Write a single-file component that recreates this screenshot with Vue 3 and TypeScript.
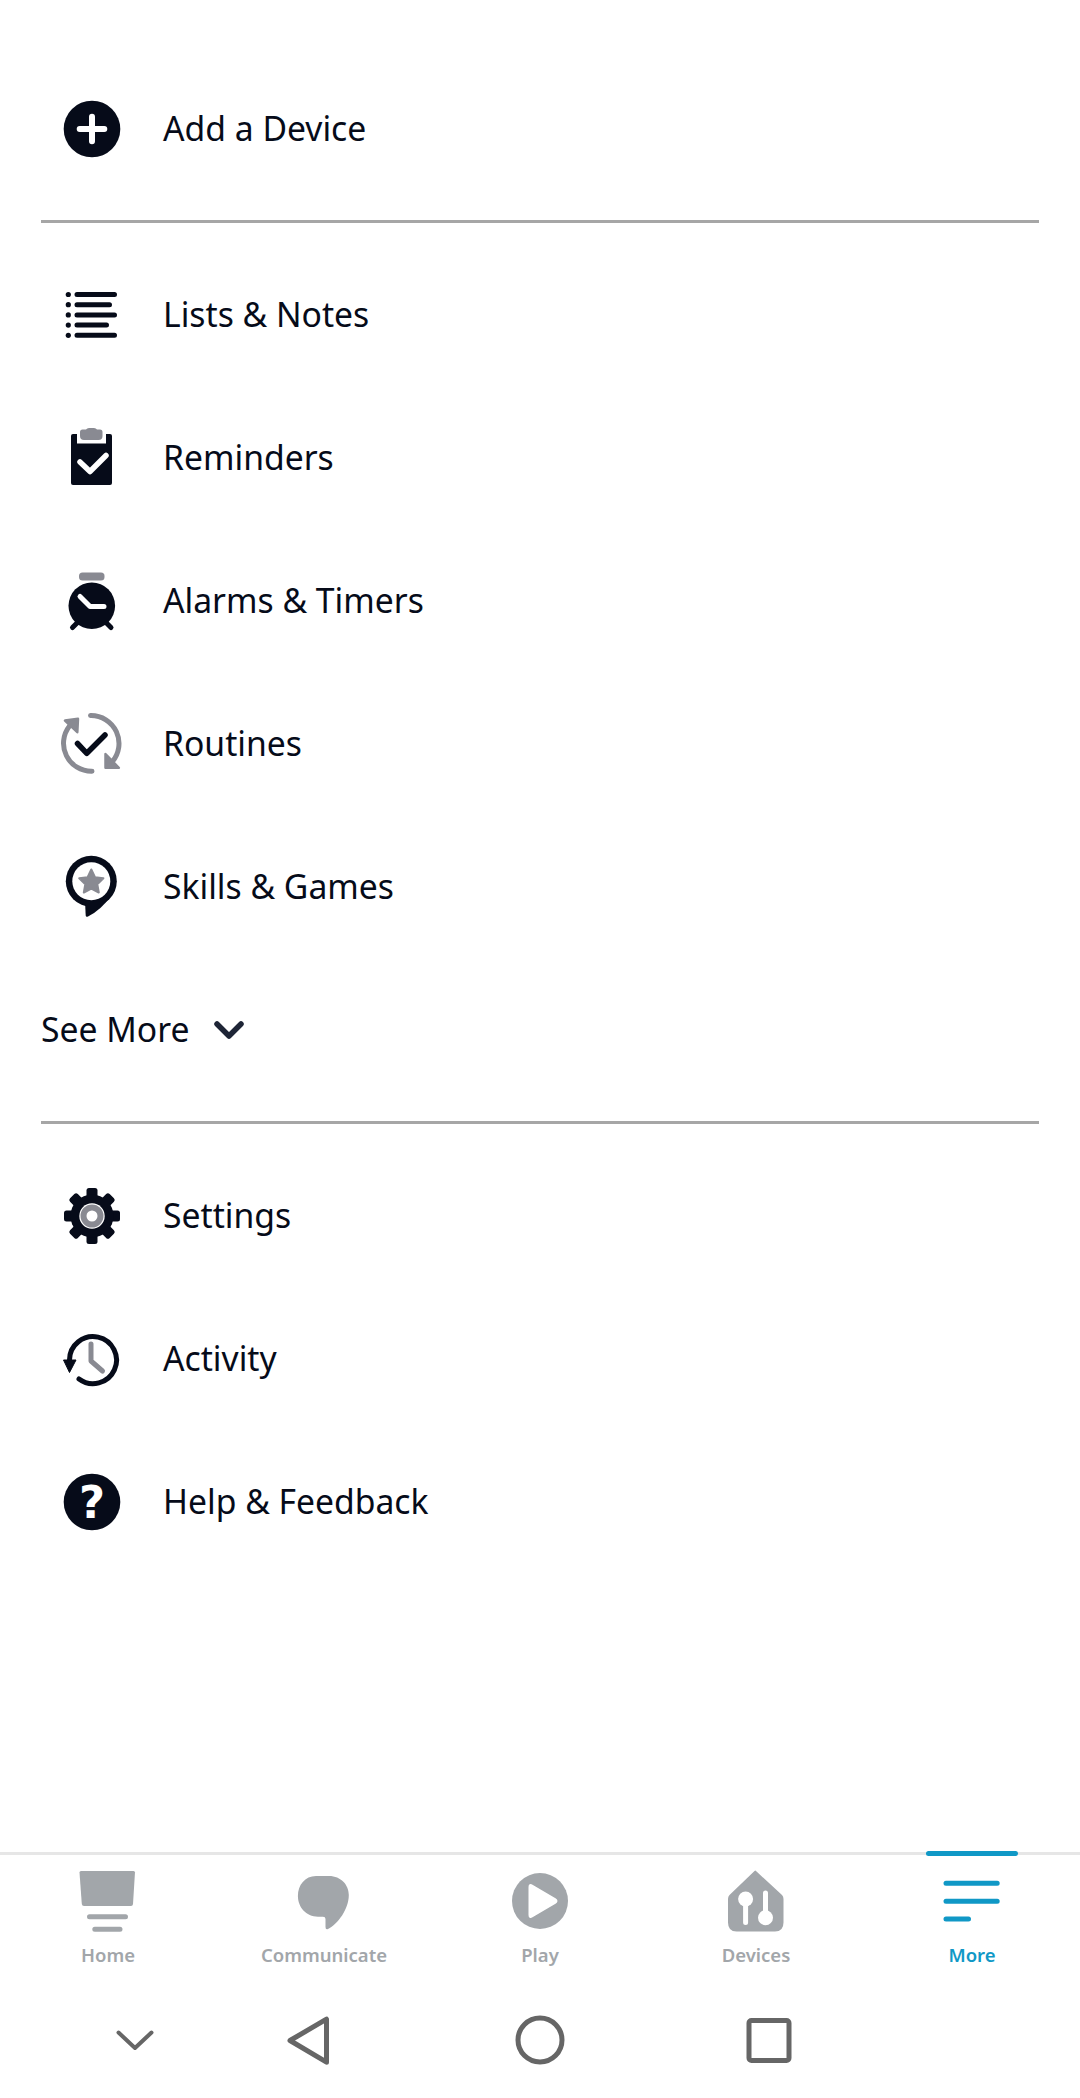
<script setup lang="ts">
interface Tab {
  label: string;
  active?: boolean;
}

const tabs: Tab[] = [
  { label: "Home" },
  { label: "Communicate" },
  { label: "Play" },
  { label: "Devices" },
  { label: "More", active: true },
];

const teeth = [0, 45, 90, 135, 180, 225, 270, 315];
</script>

<template>
  <div class="screen">
    <main class="menu">
      <section class="group">
        <a class="row">
          <svg class="icon" viewBox="0 0 64 64">
            <circle cx="32" cy="32" r="28.300" fill="#060b19" />
            <path d="M19.700 32h24.600M32 19.700v24.600" stroke="#fff" stroke-width="6" stroke-linecap="round" />
          </svg>
          <span>Add a Device</span>
        </a>
      </section>

      <section class="group">
        <a class="row">
          <svg class="icon" viewBox="0 0 64 64">
            <g fill="#060b19">
              <circle cx="8.300" cy="11.500" r="2.600" />
              <circle cx="8.300" cy="21.700" r="2.600" />
              <circle cx="8.300" cy="31.900" r="2.600" />
              <circle cx="8.300" cy="42.100" r="2.600" />
              <circle cx="8.300" cy="52.300" r="2.600" />
            </g>
            <path
              d="M17 11.500h37.500M17 21.700h32.500M17 31.900h37.500M17 42.100h29.500M17 52.300h37.500"
              stroke="#060b19"
              stroke-width="5"
              stroke-linecap="round"
            />
          </svg>
          <span>Lists &amp; Notes</span>
        </a>
        <a class="row">
          <svg class="icon" viewBox="0 0 64 64">
            <rect x="11" y="8" width="41" height="51" rx="2" fill="#060b19" />
            <path d="M17 3h29v14.500H17z" fill="#fff" />
            <path
              d="M26 3.500q1-1.500 3-1.500h5q2 0 3 1.500h3q2.500 0 2.500 2.500v4q0 4-4 4H24q-4 0-4-4V6q0-2.500 2.500-2.500z"
              fill="#898a92"
            />
            <path d="M20 36l10 9.500 16-16" fill="none" stroke="#fff" stroke-width="5.500" stroke-linecap="round" stroke-linejoin="round" />
          </svg>
          <span>Reminders</span>
        </a>
        <a class="row">
          <svg class="icon" viewBox="0 0 64 64">
            <rect x="19" y="3.500" width="25.500" height="8" rx="3.500" fill="#898a92" />
            <path d="M12.500 58.500l5-5M51 58.500l-5-5" stroke="#060b19" stroke-width="5" stroke-linecap="round" />
            <circle cx="31.800" cy="36.800" r="23.300" fill="#060b19" />
            <path d="M20 27.500l10 10h14" fill="none" stroke="#fff" stroke-width="5" stroke-linecap="round" stroke-linejoin="round" />
          </svg>
          <span>Alarms &amp; Timers</span>
        </a>
        <a class="row">
          <svg class="icon" viewBox="0 0 64 64">
            <g fill="none" stroke="#898a92" stroke-width="5" stroke-linecap="round">
              <path d="M30.500 3.500A28 28 0 0 1 52 50" />
              <path d="M32 59.300A28 28 0 0 1 9.500 14" />
            </g>
            <path d="M5 8.500l13-1.700-.7 13.400zM45.500 42l13.300 13.800H45.500z" fill="#898a92" stroke="#898a92" stroke-width="2.500" stroke-linejoin="round" />
            <path d="M17.500 31.500l9.300 9.800L45 23" fill="none" stroke="#060b19" stroke-width="5.500" stroke-linecap="round" stroke-linejoin="round" />
          </svg>
          <span>Routines</span>
        </a>
        <a class="row">
          <svg class="icon" viewBox="0 0 64 64">
            <circle cx="31.300" cy="26.300" r="25.500" fill="#060b19" />
            <path d="M25 46L25.700 60.500Q26 62.500 28 61.500Q41 55 50 42z" fill="#060b19" />
            <circle cx="31.300" cy="26.300" r="19" fill="#fff" />
            <path
              d="M31.300 14.500l3.700 7.700 8.400 1.100-6.100 5.900 1.500 8.300-7.500-4-7.500 4 1.500-8.300-6.100-5.900 8.400-1.100z"
              fill="#898a92"
              stroke="#898a92"
              stroke-width="2"
              stroke-linejoin="round"
            />
          </svg>
          <span>Skills &amp; Games</span>
        </a>
        <a class="row row--more">
          <span>See More</span>
          <svg class="chevron" viewBox="0 0 30 18">
            <path d="M3 3L15 15 27 3" fill="none" stroke="#1e2536" stroke-width="5.500" stroke-linecap="round" stroke-linejoin="round" />
          </svg>
        </a>
      </section>

      <section class="group group--last">
        <a class="row">
          <svg class="icon" viewBox="0 0 64 64">
            <g fill="#060b19">
              <rect
                v-for="deg in teeth"
                :key="deg"
                x="26.500"
                y="4"
                width="11"
                height="14"
                rx="2.500"
                :transform="`rotate(${deg} 32 32)`"
              />
              <circle cx="32" cy="32" r="21.500" />
            </g>
            <circle cx="32" cy="32" r="12.700" fill="#fff" />
            <circle cx="32" cy="32" r="8.500" fill="none" stroke="#898a92" stroke-width="6" />
          </svg>
          <span>Settings</span>
        </a>
        <a class="row">
          <svg class="icon" viewBox="0 0 64 64">
            <path d="M9.500 33A23.500 23.500 0 1 1 19 52" fill="none" stroke="#060b19" stroke-width="5" stroke-linecap="round" />
            <path d="M3.500 33h12.500L9.500 45.500z" fill="#060b19" stroke="#060b19" stroke-width="1" stroke-linejoin="round" />
            <path d="M31 17v17l11.500 10" fill="none" stroke="#898a92" stroke-width="5" stroke-linecap="round" stroke-linejoin="round" />
          </svg>
          <span>Activity</span>
        </a>
        <a class="row">
          <svg class="icon" viewBox="0 0 64 64">
            <circle cx="32" cy="32" r="28.300" fill="#060b19" />
            <text x="32" y="48" text-anchor="middle" class="help-mark">?</text>
          </svg>
          <span>Help &amp; Feedback</span>
        </a>
      </section>
    </main>

    <nav class="tabs">
      <div v-for="(tab, i) in tabs" :key="tab.label" class="tab" :class="{ 'tab--active': tab.active }">
        <svg class="tab__icon" viewBox="0 0 64 64">
          <template v-if="i === 0">
            <path d="M5 5h52.500q1.500 0 1.500 1.500L57 38q-.2 2-2 2H8q-2 0-2.200-2L3.500 6.500Q3.500 5 5 5z" fill="#a2a6aa" />
            <path d="M13.500 50.700h36M18.800 63.300h25.200" stroke="#a2a6aa" stroke-width="5" stroke-linecap="round" />
          </template>
          <template v-else-if="i === 1">
            <path
              d="M24 10H37C49 10 56.800 19 56.800 29C56.800 43 46 58 36 63Q33.500 64 33.500 61V53Q33.500 50.700 31 50.700H26C14 50.700 5.900 41 5.900 30C5.900 19 13 10 24 10z"
              fill="#a2a6aa"
            />
          </template>
          <template v-else-if="i === 2">
            <circle cx="32" cy="35" r="28" fill="#a2a6aa" />
            <path d="M21.500 21q0-3 2.500-1.500l23 13.500q3 2 0 4l-23 13.500Q21.500 52 21.500 49z" fill="#fff" stroke="#fff" stroke-width="2" stroke-linejoin="round" />
          </template>
          <template v-else-if="i === 3">
            <path d="M32 5L58 29q1.500 1.500 1.500 4v23.500q0 9-8.500 9H12.500q-8.500 0-8.500-9V33q0-2.500 1.500-4L30.500 5q1-1 1.500 0z" fill="#a2a6aa" />
            <path d="M21.600 33v23.500M41.500 27v23" stroke="#fff" stroke-width="5" stroke-linecap="round" />
            <circle cx="21.600" cy="33" r="7.500" fill="#fff" />
            <circle cx="41.500" cy="51.700" r="7.500" fill="#fff" />
          </template>
          <template v-else>
            <path d="M6 17.300h51.200M6 35.300h51.200M6 53h22.500" stroke="#1098c6" stroke-width="5" stroke-linecap="round" />
          </template>
        </svg>
        <span class="tab__label">{{ tab.label }}</span>
      </div>
    </nav>

    <div class="sysbar">
      <svg class="sys sys--down" viewBox="0 0 64 64">
        <path d="M15.500 24.500L32 40 48.500 24.500" fill="none" stroke="#666" stroke-width="4" stroke-linecap="round" stroke-linejoin="round" />
      </svg>
      <svg class="sys sys--back" viewBox="0 0 64 64">
        <path d="M14 32.500L50.500 11.200v43z" fill="none" stroke="#666" stroke-width="5" stroke-linejoin="round" />
      </svg>
      <svg class="sys sys--home" viewBox="0 0 64 64">
        <circle cx="32" cy="32" r="22" fill="none" stroke="#666" stroke-width="5" />
      </svg>
      <svg class="sys sys--recent" viewBox="0 0 64 64">
        <rect x="12" y="12.500" width="40" height="40" rx="2.500" fill="none" stroke="#666" stroke-width="5" />
      </svg>
    </div>
  </div>
</template>

<style>
html,
body {
  margin: 0;
  background: #fff;
}
</style>

<style scoped>
.screen {
  height: 2098px;
  display: flex;
  flex-direction: column;
  background: #fff;
  font-family: "Noto Sans", sans-serif;
  color: #060b19;
  overflow: hidden;
}
.menu {
  flex: 1;
  padding: 57px 41px 0;
}
.group {
  padding-bottom: 20px;
  margin-bottom: 20px;
  border-bottom: 3px solid #a6a6a6;
}
.group--last {
  border-bottom: none;
}
.row {
  height: 143px;
  display: flex;
  align-items: center;
  padding-left: 19px;
  font-size: 33.700px;
}
.row span {
  position: relative;
  top: -1px;
}
.row--more {
  padding-left: 0;
}
.icon {
  width: 64px;
  height: 64px;
  margin-right: 39px;
  flex: none;
}
.chevron {
  width: 30px;
  height: 18px;
  margin-left: 25px;
}
.help-mark {
  font-family: "DejaVu Sans", sans-serif;
  font-size: 45px;
  font-weight: 700;
  fill: #fff;
}
.tabs {
  height: 133px;
  box-sizing: border-box;
  display: grid;
  grid-template-columns: repeat(5, 1fr);
  border-top: 3px solid #e6e6e6;
}
.tab {
  position: relative;
  display: flex;
  flex-direction: column;
  align-items: center;
}
.tab--active::before {
  content: "";
  position: absolute;
  top: -4px;
  left: 62px;
  right: 62px;
  height: 5px;
  border-radius: 3px;
  background: #1098c6;
}
.tab__icon {
  width: 64px;
  height: 64px;
  margin-top: 11px;
  overflow: visible;
}
.tab__label {
  margin-top: 13px;
  font-size: 18.500px;
  font-weight: 600;
  line-height: 24px;
  color: #a2a6aa;
}
.tab--active .tab__label {
  color: #1098c6;
}
.sysbar {
  height: 113px;
  box-sizing: border-box;
  padding-top: 23px;
  display: flex;
  align-items: flex-start;
}
.sys {
  width: 64px;
  height: 64px;
  flex: none;
}
.sys--down {
  margin-left: 103px;
}
.sys--back {
  margin-left: 109px;
}
.sys--home {
  margin-left: 168px;
}
.sys--recent {
  margin-left: 165px;
}
</style>
